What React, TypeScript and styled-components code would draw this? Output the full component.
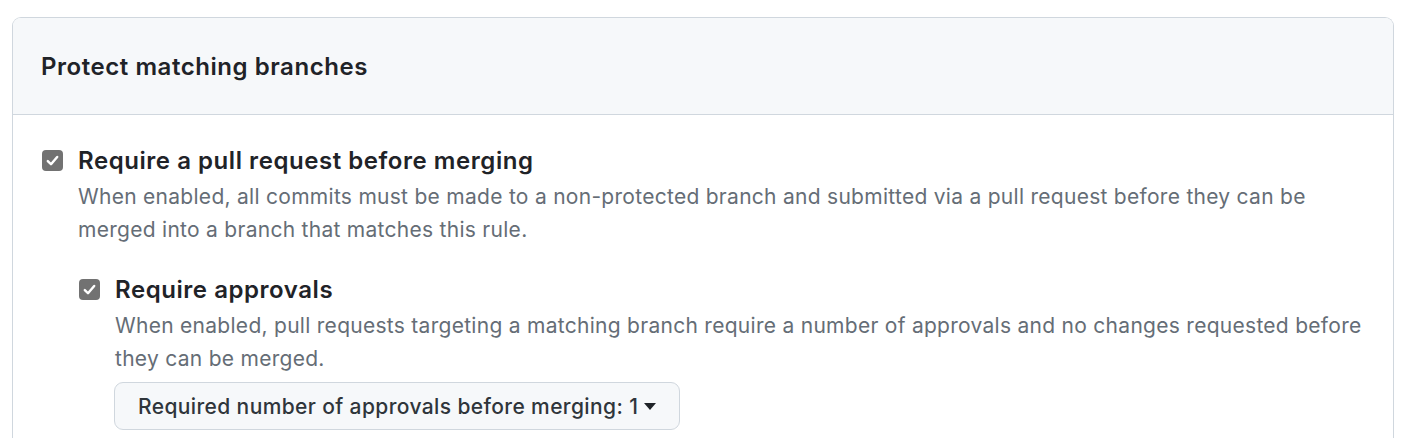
import React from "react";
import styled, { createGlobalStyle } from "styled-components";

const Global = createGlobalStyle`
  html, body { margin: 0; padding: 0; background: #ffffff; }
  body {
    font-family: Inter, "Noto Sans", "Liberation Sans", sans-serif;
    color: #1f2328;
    -webkit-font-smoothing: antialiased;
  }
`;

const Page = styled.div`
  padding: 17px 14px 0 12px;
`;

const Box = styled.section`
  border: 1px solid #d0d7de;
  border-bottom: none;
  border-radius: 9px 9px 0 0;
  overflow: hidden;
  height: 430px;
`;

const BoxHeader = styled.header`
  background: #f6f8fa;
  border-bottom: 1px solid #d0d7de;
  height: 97px;
  display: flex;
  align-items: center;
  padding: 0 28px;
  box-sizing: border-box;
`;

const Title = styled.h2`
  margin: 0;
  font-size: 24px;
  font-weight: 600;
  letter-spacing: 0.55px;
  color: #1f2328;
`;

const BoxBody = styled.div`
  padding: 30px 28px 0 29px;
`;

const Item = styled.div<{ $nested?: boolean }>`
  display: grid;
  grid-template-columns: 21px 1fr;
  column-gap: 15px;
  margin-top: ${(p) => (p.$nested ? "28px" : "0")};
  margin-left: ${(p) => (p.$nested ? "37px" : "0")};
`;

const CheckBox = styled.span`
  width: 21px;
  height: 21px;
  border-radius: 4px;
  background: #727272;
  margin-top: 5px;
  display: flex;
  align-items: center;
  justify-content: center;
`;

const Content = styled.div`
  min-width: 0;
`;

const Label = styled.div`
  font-size: 24px;
  line-height: 32px;
  font-weight: 600;
  letter-spacing: 0.55px;
  color: #1f2328;
`;

const Desc = styled.p`
  margin: 4px 0 0;
  font-size: 21px;
  line-height: 32.5px;
  letter-spacing: 0.28px;
  color: #656d76;
`;

const SelectButton = styled.button`
  margin-top: 7px;
  margin-left: -1px;
  height: 48px;
  display: inline-flex;
  align-items: center;
  gap: 6px;
  padding: 0 23px;
  background: #f6f8fa;
  border: 1px solid #d0d7de;
  border-radius: 9px;
  font-family: inherit;
  font-size: 21px;
  font-weight: 500;
  letter-spacing: 0.38px;
  color: #2f353b;
  cursor: pointer;
`;

const Caret = styled.span`
  width: 0;
  height: 0;
  border-left: 6px solid transparent;
  border-right: 6px solid transparent;
  border-top: 7px solid #1f2328;
  margin-top: 1px;
`;

const Check = () => (
  <svg width="15" height="15" viewBox="0 0 16 16" aria-hidden="true">
    <path
      d="M3 8.6 L6.4 12 L13 4.2"
      fill="none"
      stroke="#ffffff"
      strokeWidth="2.6"
      strokeLinecap="round"
      strokeLinejoin="round"
    />
  </svg>
);

export default function App() {
  return (
    <>
      <Global />
      <Page>
        <Box>
          <BoxHeader>
            <Title>Protect matching branches</Title>
          </BoxHeader>
          <BoxBody>
            <Item>
              <CheckBox role="checkbox" aria-checked="true">
                <Check />
              </CheckBox>
              <Content>
                <Label>Require a pull request before merging</Label>
                <Desc>
                  When enabled, all commits must be made to a non-protected branch and submitted via a pull
                  request before they can be merged into a branch that matches this rule.
                </Desc>
              </Content>
            </Item>
            <Item $nested>
              <CheckBox role="checkbox" aria-checked="true">
                <Check />
              </CheckBox>
              <Content>
                <Label>Require approvals</Label>
                <Desc>
                  When enabled, pull requests targeting a matching branch require a number of approvals and no
                  changes requested before they can be merged.
                </Desc>
                <SelectButton>
                  Required number of approvals before merging: 1
                  <Caret />
                </SelectButton>
              </Content>
            </Item>
          </BoxBody>
        </Box>
      </Page>
    </>
  );
}
